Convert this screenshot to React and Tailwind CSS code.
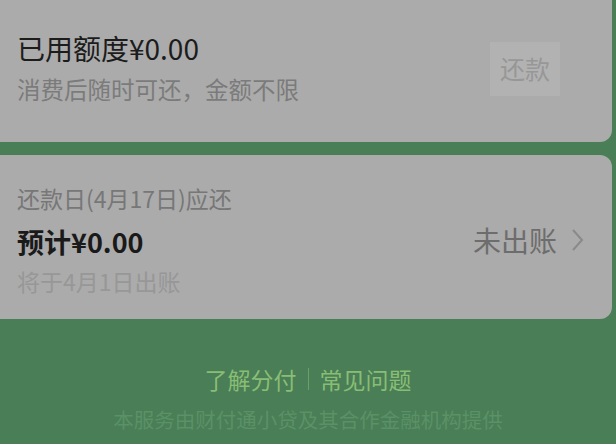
export default function App() {
  const font = { fontFamily: '"Noto Sans CJK SC", "Noto Sans", sans-serif' }
  return (
    <div className="h-[444px] w-[616px] overflow-hidden bg-[#4a7e56]" style={font}>
      <div className="mr-[4px] flex h-[142px] items-start justify-between rounded-br-[12px] bg-[#ababab] pl-[17px] pr-[52px] pt-[30px]">
        <div className="flex w-full items-center justify-between">
          <div>
            <p className="text-[28px] leading-[36px] text-[#1c1c1c]">已用额度¥0.00</p>
            <p className="mt-[8px] text-[23.5px] leading-[30px] text-[#7b7b7b]">
              消费后随时可还，金额不限
            </p>
          </div>
          <div className="mt-[4px] flex h-[54px] w-[70px] items-center justify-center bg-[#b2b2b2] text-[25px] text-[#979797]">
            还款
          </div>
        </div>
      </div>

      <div className="mt-[13px] mr-[4px] flex h-[164px] items-start justify-between rounded-r-[12px] bg-[#ababab] pl-[17px] pr-[28px] pt-[28px]">
        <div className="flex w-full items-center justify-between">
          <div>
            <p className="text-[23px] leading-[30px] text-[#777]">还款日(4月17日)应还</p>
            <p className="mt-[11px] text-[27px] font-bold leading-[36px] text-[#1a1a1a]">
              预计¥0.00
            </p>
            <p className="mt-[6px] text-[23px] leading-[30px] text-[#979797]">将于4月1日出账</p>
          </div>
          <div className="flex items-center gap-[14px] text-[28px] text-[#6d6d6d]">
            <span>未出账</span>
            <svg width="13" height="24" viewBox="0 0 13 24" fill="none">
              <path d="M2 2l9 10-9 10" stroke="#8a8a8a" strokeWidth="2" />
            </svg>
          </div>
        </div>
      </div>

      <div className="mt-[45px] flex items-center justify-center text-[23px] leading-[30px] text-[#89bd74]">
        <span>了解分付</span>
        <span className="mx-[11px] h-[22px] w-[1px] bg-[#6a9e6a]" />
        <span>常见问题</span>
      </div>
      <p className="mt-[12px] text-center text-[20.5px] leading-[26px] text-[#5a9166]">
        本服务由财付通小贷及其合作金融机构提供
      </p>
    </div>
  )
}
